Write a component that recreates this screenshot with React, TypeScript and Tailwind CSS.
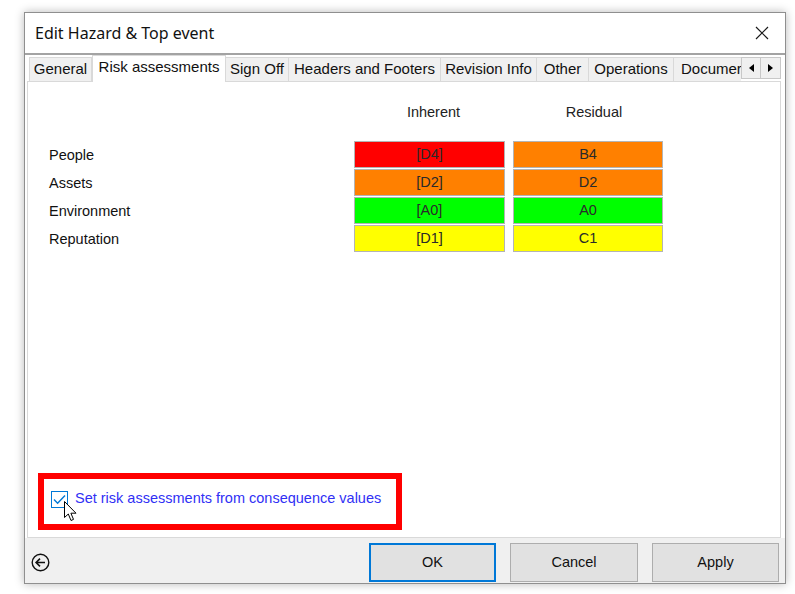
import React from "react";

type Row = { label: string; inh: string; inhBg: string; res: string; resBg: string };

const rows: Row[] = [
  { label: "People", inh: "[D4]", inhBg: "bg-[#ff0000]", res: "B4", resBg: "bg-[#ff8000]" },
  { label: "Assets", inh: "[D2]", inhBg: "bg-[#ff8000]", res: "D2", resBg: "bg-[#ff8000]" },
  { label: "Environment", inh: "[A0]", inhBg: "bg-[#00ff00]", res: "A0", resBg: "bg-[#00ff00]" },
  { label: "Reputation", inh: "[D1]", inhBg: "bg-[#ffff00]", res: "C1", resBg: "bg-[#ffff00]" },
];

const tabs = [
  { name: "General", w: "w-[63px]" },
  { name: "Risk assessments", w: "w-[134px]", active: true },
  { name: "Sign Off", w: "w-[63px]" },
  { name: "Headers and Footers", w: "w-[152px]" },
  { name: "Revision Info", w: "w-[96px]" },
  { name: "Other", w: "w-[52px]" },
  { name: "Operations", w: "w-[85px]" },
];

function CloseIcon() {
  return (
    <svg width="14" height="14" viewBox="0 0 14 14">
      <path d="M1 1 L13 13 M13 1 L1 13" stroke="#1a1a1a" strokeWidth="1.2" />
    </svg>
  );
}

function BackIcon() {
  return (
    <svg width="19" height="19" viewBox="0 0 19 19">
      <circle cx="9.5" cy="9.5" r="8.3" fill="none" stroke="#111" strokeWidth="1.4" />
      <path d="M14 9.5 H5.2 M9 5.6 L5.1 9.5 L9 13.4" fill="none" stroke="#111" strokeWidth="1.6" />
    </svg>
  );
}

function Cursor() {
  return (
    <svg width="13" height="21" viewBox="0 0 13 21" className="absolute left-[20px] top-[22px]">
      <path
        d="M0.5 0.5 L0.5 16.5 L4.3 13 L7 19.5 L9.5 18.4 L6.9 12.2 L12 12.2 Z"
        fill="#fff"
        stroke="#000"
        strokeWidth="1"
        strokeLinejoin="round"
      />
    </svg>
  );
}

export default function App() {
  return (
    <div className="w-[795px] h-[594px] bg-white overflow-hidden pt-[12px] pl-[24px] font-['Liberation_Sans',Arial,sans-serif]">
      <div className="w-[762px] h-[572px] border border-[#8f8f8f] bg-white flex flex-col shadow-[0_0_9px_rgba(0,0,0,0.28)]">
        {/* title bar */}
        <div className="h-[40px] flex items-center justify-between pl-[10px] pr-[16px]">
          <span className="text-[16px] text-[#111] font-['Noto_Sans',sans-serif] leading-none">
            Edit Hazard &amp; Top event
          </span>
          <CloseIcon />
        </div>
        <div className="h-[2px] bg-[#a3a3a3]" />

        {/* tabs */}
        <div className="h-[26px] flex items-end pl-[4px] text-[15px] text-[#111]">
          {tabs.map((t) =>
            t.active ? (
              <div
                key={t.name}
                className={`${t.w} h-[27px] -mb-px relative z-10 bg-white border border-b-0 border-[#d9d9d9] flex items-center justify-center pb-[3px]`}
              >
                {t.name}
              </div>
            ) : (
              <div
                key={t.name}
                className={`${t.w} h-[24px] bg-[#f0f0f0] border border-l-0 border-b-0 border-[#d9d9d9] first:border-l flex items-center justify-center`}
              >
                {t.name}
              </div>
            )
          )}
          <div className="w-[67px] h-[24px] bg-[#f0f0f0] border-t border-[#d9d9d9] whitespace-nowrap pl-[7px] flex items-center">
            Documer
          </div>
          <div className="h-[24px] flex items-start">
            <div className="w-[20px] h-[22px] bg-[#f0f0f0] border border-[#c8c8c8] flex items-center justify-center">
              <svg width="5" height="8" viewBox="0 0 5 8">
                <path d="M5 0 L0 4 L5 8 Z" fill="#000" />
              </svg>
            </div>
            <div className="w-[20px] h-[22px] bg-[#f0f0f0] border border-l-0 border-[#c8c8c8] flex items-center justify-center">
              <svg width="5" height="8" viewBox="0 0 5 8">
                <path d="M0 0 L5 4 L0 8 Z" fill="#000" />
              </svg>
            </div>
          </div>
        </div>

        {/* panel */}
        <div className="ml-[2px] mr-[4px] h-[457px] border border-[#d9d9d9] bg-white flex flex-col">
          <div className="flex pl-[330px] mt-[22px] text-[14.5px] text-[#222] h-[18px] items-center">
            <div className="w-[151px] text-center">Inherent</div>
            <div className="w-[150px] ml-[10px] text-center">Residual</div>
          </div>
          <div className="mt-[19px] pl-[21px] grid grid-cols-[297px_151px_150px] gap-x-[8px] gap-y-[1px] text-[14.5px]">
            {rows.map((r) => (
              <React.Fragment key={r.label}>
                <div className="h-[27px] flex items-center pt-[2px] text-[#111]">{r.label}</div>
                <div className={`h-[27px] ${r.inhBg} border border-[#b4b4b4] flex items-center justify-center text-[#2a2a2a]`}>
                  {r.inh}
                </div>
                <div className={`h-[27px] ${r.resBg} border border-[#b4b4b4] flex items-center justify-center text-[#2a2a2a]`}>
                  {r.res}
                </div>
              </React.Fragment>
            ))}
          </div>

          <div className="mt-auto mb-[7px] ml-[10px] w-[364px] h-[57px] border-[6px] border-[#ff0000] relative flex items-center pl-[7px] pb-[5px]">
            <div className="w-[17px] h-[17px] border border-[#0078d7] bg-white flex items-center justify-center">
              <svg width="13" height="11" viewBox="0 0 13 11">
                <path d="M1 5.5 L4.6 9.2 L12 1.4" fill="none" stroke="#0078d7" strokeWidth="1.4" />
              </svg>
            </div>
            <span className="ml-[7px] text-[14.5px] text-[#3030f5]">Set risk assessments from consequence values</span>
            <Cursor />
          </div>
        </div>

        {/* bottom bar */}
        <div className="flex-1 bg-[#f0f0f0] flex items-start pt-[5px] pl-[6px] pr-[6px]">
          <div className="h-[39px] flex items-center">
            <BackIcon />
          </div>
          <div className="ml-auto flex gap-[14px] text-[14.5px] text-[#111]">
            <button className="w-[127px] h-[39px] bg-[#e1e1e1] border-2 border-[#0078d7]">OK</button>
            <button className="w-[128px] h-[39px] bg-[#e1e1e1] border border-[#adadad]">Cancel</button>
            <button className="w-[127px] h-[39px] bg-[#e1e1e1] border border-[#adadad]">Apply</button>
          </div>
        </div>
      </div>
    </div>
  );
}
